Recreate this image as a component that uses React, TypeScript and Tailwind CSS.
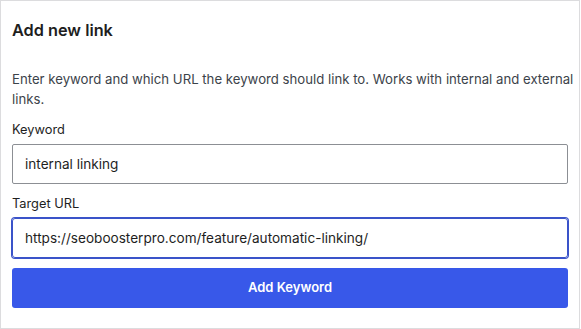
import { useState } from 'react';

const App = () => {
    const [keyword, setKeyword] = useState('internal linking');
    const [url, setUrl] = useState('https://seoboosterpro.com/feature/automatic-linking/');

    return (
        <div className="w-[581px] h-[329px] bg-white font-['Inter','Liberation_Sans',sans-serif]">
            <div className="w-[580px] h-[329px] border border-[#dcdcde] bg-white px-[11px] pt-[17px] flex flex-col">
                <h2 className="text-[16.3px] leading-6 font-semibold text-[#1e1e1e]">Add new link</h2>

                <p className="mt-[27px] -mr-3 text-[13.2px] leading-5 text-[#3c434a]">
                    Enter keyword and which URL the keyword should link to. Works with internal and external links.
                </p>

                <label className="mt-[11px] text-[12.8px] leading-5 text-[#1e1e1e]" htmlFor="keyword">Keyword</label>
                <input
                    id="keyword"
                    className="mt-1 h-10 w-full border border-[#8c8f94] rounded-[2px] px-3 text-[13.6px] text-[#1e1e1e] outline-none"
                    value={keyword}
                    onChange={(e) => setKeyword(e.target.value)}
                />

                <label className="mt-[10px] text-[12.8px] leading-5 text-[#1e1e1e]" htmlFor="target-url">Target URL</label>
                <input
                    id="target-url"
                    className="mt-1 h-10 w-full border border-[#3a53c9] ring-1 ring-[#3a53c9] rounded-[3px] px-3 text-[13.6px] text-[#1e1e1e] outline-none"
                    value={url}
                    onChange={(e) => setUrl(e.target.value)}
                />

                <button
                    type="button"
                    className="mt-[10px] h-10 w-full bg-[#3858e9] hover:bg-[#2145e6] text-white text-[13px] font-semibold rounded-[3px]"
                >
                    Add Keyword
                </button>
            </div>
        </div>
    );
};

export default App;
